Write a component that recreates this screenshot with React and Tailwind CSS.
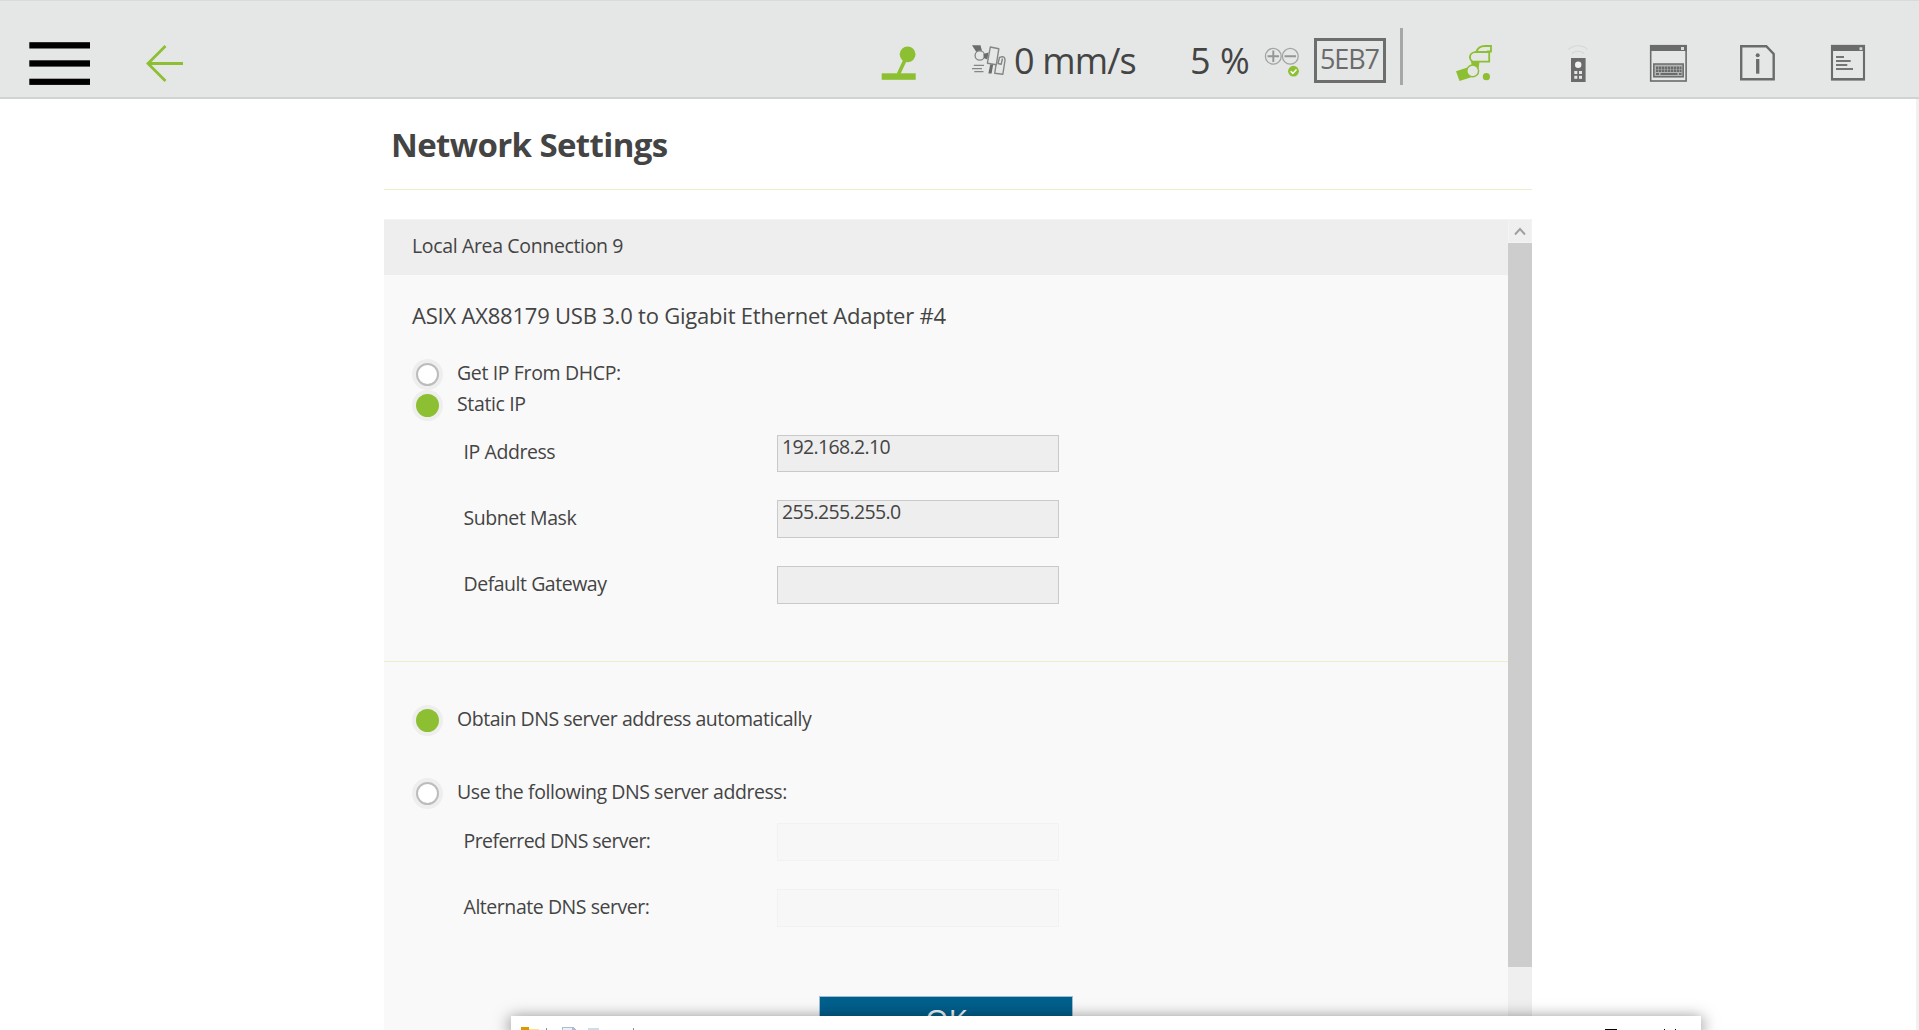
import React from "react";

const GRAY = "#6b6b6b";
const GREEN = "#8dbf33";

function Icon({ x, w, className = "", children }) {
  return (
    <svg
      className={"mt-3 shrink-0 " + className}
      width={w}
      height={46}
      viewBox={`${x} 40 ${w} 46`}
      fill="none"
    >
      {children}
    </svg>
  );
}

const MenuIcon = () => (
  <Icon x={29} w={61} className="ml-[29px]">
    <g fill="#000">
      <rect x="29.3" y="42.2" width="60.7" height="6.3" />
      <rect x="29.3" y="60.3" width="60.7" height="6.3" />
      <rect x="29.3" y="78.7" width="60.7" height="6.2" />
    </g>
  </Icon>
);

const BackIcon = () => (
  <Icon x={145} w={39} className="ml-[55px]">
    <path d="M183 63.5H148M165.5 46 148 63.5 165.5 81" stroke={GREEN} strokeWidth="2.8" />
  </Icon>
);

const JoystickIcon = () => (
  <Icon x={880} w={38} className="ml-[696px]">
    <rect x="881.7" y="73.3" width="34" height="6.5" fill={GREEN} />
    <circle cx="907.6" cy="54.3" r="7.9" fill={GREEN} />
    <path d="M898.5 74 906 58" stroke={GREEN} strokeWidth="3.6" />
  </Icon>
);

const SpeedIcon = () => (
  <Icon x={971} w={36} className="ml-[53px]">
    <path d="M972 45.2H980.5L982 51 977 53Z" fill={GRAY} />
    <circle cx="979.8" cy="55.5" r="4.7" stroke="#858585" strokeWidth="1.3" fill="#e5e7e6" />
    <path d="M983.5 54 988.5 52.5 987.3 59.5 983.8 58Z" fill={GRAY} />
    <path d="M990.3 47 998.8 48.8 996.3 64.8 987.4 63.2Z" stroke="#858585" strokeWidth="1.4" strokeLinejoin="round" />
    <path d="M990.2 64.5H993.2L991.6 73.5H988.4Z" fill={GRAY} />
    <path d="M996 65 994.7 73.3 1002.8 74.3 1005 60.5C1005.2 57 1003.5 56.5 1001.5 56.8L999.5 57.5 998 63.5 1001.2 64.3 1002.5 58.5" stroke="#858585" strokeWidth="1.4" strokeLinejoin="round" />
    <path d="M973.8 65.4H984M972 68.7H982M974.3 71.6H983.5" stroke="#858585" strokeWidth="1.2" />
  </Icon>
);

const StepIcon = () => (
  <Icon x={1264} w={36} className="ml-[9px]">
    <g stroke="#a3a3a3" strokeWidth="1.3">
      <circle cx="1273.3" cy="56.3" r="7.9" />
      <circle cx="1290.3" cy="56.3" r="7.9" />
    </g>
    <path d="M1267.5 56.3H1279M1273.3 50.5V62M1284.5 56.3H1296" stroke="#959595" strokeWidth="1.9" />
    <circle cx="1293.5" cy="71.2" r="5.4" fill={GREEN} />
    <path d="M1290.7 71.3 1292.8 73.4 1296.5 69.4" stroke="#fff" strokeWidth="1.5" />
  </Icon>
);

const RobotIcon = () => (
  <Icon x={1455} w={38} className="ml-[52px]">
    <path d="M1456 71.3 1467.5 67.5 1473 76 1470.5 77.6 1459.5 81Z" fill={GREEN} />
    <path d="M1471 62H1479.5L1478.5 69 1472 66Z" fill={GREEN} />
    <circle cx="1472.7" cy="70.9" r="5.9" stroke={GREEN} strokeWidth="1.5" fill="#e5e7e6" />
    <path d="M1489.8 52H1475C1469 53.5 1468.5 58.5 1472.5 61.7H1489.2V52" stroke={GREEN} strokeWidth="1.8" />
    <path d="M1476.5 52C1477.5 48 1481 46 1485 46H1491V51.5H1487" stroke={GREEN} strokeWidth="1.8" />
    <circle cx="1486.4" cy="76.7" r="3.6" fill={GREEN} />
  </Icon>
);

const RemoteIcon = () => (
  <Icon x={1566} w={24} className="ml-[73px]">
    <path d="M1568.5 49.5C1573 44.5 1583 44.5 1587.5 49.5M1572 53.5C1575 50.5 1581 50.5 1584 53.5" stroke="#d5d7d6" strokeWidth="1.2" />
    <rect x="1571" y="58" width="14.6" height="24" fill={GRAY} />
    <circle cx="1578.2" cy="64.8" r="3.2" fill="#f3f3f3" />
    <g fill="#e5e7e6">
      <rect x="1574.3" y="71" width="3" height="3" />
      <rect x="1579" y="71" width="3" height="3" />
      <rect x="1574.3" y="75.8" width="3" height="3" />
      <rect x="1579" y="75.8" width="3" height="3" />
    </g>
  </Icon>
);

const KeyboardIcon = () => (
  <Icon x={1649} w={39} className="ml-[59px]">
    <rect x="1650.7" y="45.7" width="35.4" height="35.3" stroke={GRAY} strokeWidth="1.6" />
    <rect x="1650" y="45" width="36.8" height="6" fill={GRAY} />
    <rect x="1681" y="47" width="3" height="3" fill="#d8dad9" />
    <rect x="1653.8" y="64" width="29.4" height="12.8" fill="#b3b4b4" stroke={GRAY} strokeWidth="1.5" />
    <path d="M1656 67.7H1681.5M1656 70.7H1681.5" stroke={GRAY} strokeWidth="2.6" strokeDasharray="2.4 0.6" />
    <path d="M1656 74H1659M1660.5 74H1677.5M1679 74H1681.5" stroke={GRAY} strokeWidth="2" />
  </Icon>
);

const InfoIcon = () => (
  <Icon x={1739} w={37} className="ml-[51px]">
    <path d="M1741.2 46.2H1766.3L1773.7 54V79.3H1741.2Z" stroke={GRAY} strokeWidth="2.4" />
    <circle cx="1757.7" cy="55.3" r="2" fill={GRAY} />
    <path d="M1757.7 59V73.7" stroke={GRAY} strokeWidth="3.3" />
  </Icon>
);

const LogIcon = () => (
  <Icon x={1830} w={36} className="ml-[54px]">
    <rect x="1832" y="45.9" width="32" height="33.5" stroke={GRAY} strokeWidth="2.1" />
    <rect x="1831" y="45" width="34" height="6" fill={GRAY} />
    <rect x="1831" y="78" width="34" height="2.3" fill={GRAY} />
    <rect x="1859.5" y="47.3" width="2.8" height="2.8" fill="#d8dad9" />
    <path d="M1836 57H1844M1836 61H1850.7M1836 65H1847.3M1836 69H1853" stroke="#757575" strokeWidth="2.2" />
  </Icon>
);

function Radio({ checked, className = "", children }) {
  return (
    <div className={"flex h-[31px] items-center pl-7 " + className}>
      <span className="flex size-[31px] shrink-0 items-center justify-center rounded-full bg-[#eeeeee]">
        <span
          className={
            "size-[23px] rounded-full " +
            (checked ? "bg-[#8dbf33]" : "border-2 border-[#bcbcbc] bg-white")
          }
        />
      </span>
      <span className="ml-[14px] pb-[4px] leading-6">{children}</span>
    </div>
  );
}

function Field({ label, labelClass, value, valueClass = "", disabled, className }) {
  return (
    <div className={"flex items-start pl-[79.5px] " + className}>
      <span className={"w-[313.5px] shrink-0 leading-6 " + labelClass}>{label}</span>
      <span
        className={
          "h-full w-[282px] border pl-1 leading-[21px] " +
          (disabled ? "border-[#f2f2f2] bg-[#f7f7f7] " : "border-[#c9c9c9] bg-[#eeeeee] ") +
          valueClass
        }
      >
        {value}
      </span>
    </div>
  );
}

export default function App() {
  return (
    <div className="relative flex h-[1030px] w-[1919px] flex-col overflow-hidden bg-white font-['Open_Sans',sans-serif] text-[19.5px] whitespace-nowrap text-[#444444]">
      <header className="h-[99px] shrink-0 border-t border-b-2 border-t-[#d9dbda] border-b-[#d1d2d2] bg-[#e5e7e6]">
        <div className="mt-[27px] flex h-[58px] items-start">
          <MenuIcon />
          <BackIcon />
          <JoystickIcon />
          <SpeedIcon />
          <span className="mt-[13px] ml-[7px] w-[129px] text-[36px] leading-[40px] tracking-[-0.85px]">0 mm/s</span>
          <span className="mt-[13px] ml-[47px] w-[65px] text-[36px] leading-[40px]">5 %</span>
          <StepIcon />
          <span className="mt-[10px] ml-[14px] h-[45px] w-[72px] border-[3px] border-[#6d6d6d] pl-[3px] text-[27px] leading-[36px] tracking-[-1.1px] text-[#6b6b6b]">5EB7</span>
          <span className="ml-[14px] h-[57px] w-[3px] bg-[#a6a7a7]" />
          <RobotIcon />
          <RemoteIcon />
          <KeyboardIcon />
          <InfoIcon />
          <LogIcon />
        </div>
      </header>

      <div className="flex min-h-0 flex-1 justify-between">
        <main className="ml-[384px] flex w-[1148px] flex-col">
          <h1 className="mt-[26px] pl-[7px] text-[33px] leading-[40px] font-bold tracking-[-0.62px]">Network Settings</h1>
          <div className="mt-[24px] h-px shrink-0 bg-[#ebf0cc]" />

          <div className="mt-[29px] flex min-h-0 flex-1">
            <section className="w-[1124px] overflow-hidden bg-[#f9f9f9]">
              <div className="flex h-14 items-center border-t border-t-[#f4f4f4] bg-[#eeeeee] pb-[4px] pl-[28px] tracking-[-0.35px]">
                Local Area Connection 9
              </div>
              <h2 className="mt-[26px] pl-7 text-[22px] leading-7 tracking-[-0.21px]">
                ASIX AX88179 USB 3.0 to Gigabit Ethernet Adapter #4
              </h2>

              <Radio className="mt-[30px] tracking-[-0.36px]">Get IP From DHCP:</Radio>
              <Radio checked className="tracking-[-0.36px]">Static IP</Radio>
              <Field className="mt-[14px] h-[37px]" label="IP Address" labelClass="mt-[5px] tracking-[-0.42px]" value="192.168.2.10" valueClass="tracking-[-0.65px]" />
              <Field className="mt-7 h-[38px]" label="Subnet Mask" labelClass="mt-[6px] tracking-[-0.42px]" value="255.255.255.0" valueClass="tracking-[-0.65px]" />
              <Field className="mt-7 h-[38px]" label="Default Gateway" labelClass="mt-[6px] tracking-[-0.47px]" />

              <div className="mt-[57px] h-px bg-[#ebf0cc]" />

              <Radio checked className="mt-[43px] tracking-[-0.47px]">Obtain DNS server address automatically</Radio>
              <Radio className="mt-[42px] tracking-[-0.43px]">Use the following DNS server address:</Radio>
              <Field className="mt-[14px] h-[38px]" label="Preferred DNS server:" labelClass="mt-[6px] tracking-[-0.56px]" disabled />
              <Field className="mt-7 h-[38px]" label="Alternate DNS server:" labelClass="mt-[6px] tracking-[-0.45px]" disabled />

              <button className="mt-[69px] ml-[435px] block h-[60px] w-[254px] border border-[#9dbfd2] bg-[#005f8d] text-center text-[30px] leading-[45px] text-[#f0f5f8]">
                <span className="block h-[58px]">OK</span>
              </button>
            </section>

            <div className="flex w-6 flex-col bg-[#efefef]">
              <div className="flex h-6 items-center justify-center border border-[#f3f3f3]">
                <svg width="12" height="9" viewBox="0 0 12 9" fill="none">
                  <path d="M1 7.5 6 2 11 7.5" stroke="#a0a0a0" strokeWidth="2" />
                </svg>
              </div>
              <div className="h-[724px] bg-[#cdcdcd]" />
            </div>
          </div>
        </main>
        <div className="w-[3px] bg-[#f1f1f1]" />
      </div>

      {/* Top edge of the window that lies over the page */}
      <div className="absolute bottom-0 left-[511px] flex h-[14px] w-[1190px] items-end bg-white shadow-[0_3px_16px_1px_rgba(0,0,0,0.5)]">
        <svg width="1190" height="4" viewBox="511 1026 1190 4" shapeRendering="crispEdges">
          <rect x="521" y="1027" width="8" height="3" fill="#dc9a00" />
          <rect x="529" y="1029" width="10" height="1" fill="#ffe08a" />
          <rect x="546" y="1028" width="1" height="2" fill="#8c8c8c" />
          <path d="M562 1030V1027H573L577 1030Z" fill="#aebdd3" />
          <rect x="563" y="1028" width="9" height="2" fill="#eaf1fa" />
          <rect x="588" y="1028" width="11" height="2" fill="#cfdceb" />
          <rect x="633" y="1028" width="1" height="2" fill="#8c8c8c" />
          <rect x="1605" y="1029" width="12" height="1" fill="#000" />
          <rect x="1664" y="1029" width="1" height="1" fill="#000" />
          <rect x="1675" y="1029" width="1" height="1" fill="#000" />
        </svg>
      </div>
    </div>
  );
}
